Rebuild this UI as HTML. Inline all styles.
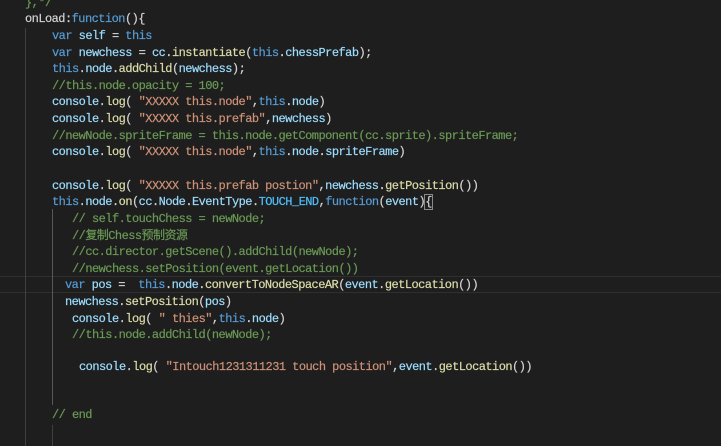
<!DOCTYPE html>
<html><head><meta charset="utf-8"><style>
html,body{margin:0;padding:0;background:#1e1e1e;width:721px;height:446px;overflow:hidden}
.l{position:absolute;white-space:pre;font-family:"Liberation Mono","Noto Sans CJK SC",monospace;font-size:12px;letter-spacing:-0.54px;line-height:16px;color:#d4d4d4;-webkit-text-stroke:0.2px}
.k{color:#569cd6}.v{color:#9cdcfe}.f{color:#dcdcaa}.s{color:#ce9178}.c{color:#6a9955}.e{color:#4fc1ff}
.g{position:absolute;width:1px;background:#404040}
.hl{position:absolute;left:0;width:721px;top:276px;height:15px;border-top:1px solid #2f2f2f;border-bottom:1px solid #2f2f2f}
</style></head><body>
<div class="hl"></div>
<div class="g" style="left:25px;top:28px;height:418px"></div>
<div class="g" style="left:52px;top:209px;height:196px;background:#585858"></div>
<div class="g" style="left:52px;top:425px;height:21px"></div>
<div class="l c" style="left:25px;top:-5px">},*/</div>
<div class="l" style="left:25px;top:11px">onLoad:<span class="k">function</span>(){</div>
<div class="l" style="left:52px;top:28px"><span class="k">var</span> <span class="v">self</span> = <span class="k">this</span></div>
<div class="l" style="left:52px;top:45px"><span class="k">var</span> <span class="v">newchess</span> = <span class="v">cc</span>.<span class="f">instantiate</span>(<span class="k">this</span>.<span class="v">chessPrefab</span>);</div>
<div class="l" style="left:52px;top:61px"><span class="k">this</span>.<span class="v">node</span>.<span class="f">addChild</span>(<span class="v">newchess</span>);</div>
<div class="l c" style="left:52px;top:78px">//this.node.opacity = 100;</div>
<div class="l" style="left:52px;top:94px"><span class="v">console</span>.<span class="f">log</span>( <span class="s">"XXXXX this.node"</span>,<span class="k">this</span>.<span class="v">node</span>)</div>
<div class="l" style="left:52px;top:111px"><span class="v">console</span>.<span class="f">log</span>( <span class="s">"XXXXX this.prefab"</span>,<span class="v">newchess</span>)</div>
<div class="l c" style="left:52px;top:128px">//newNode.spriteFrame = this.node.getComponent(cc.sprite).spriteFrame;</div>
<div class="l" style="left:52px;top:144px"><span class="v">console</span>.<span class="f">log</span>( <span class="s">"XXXXX this.node"</span>,<span class="k">this</span>.<span class="v">node</span>.<span class="v">spriteFrame</span>)</div>
<div class="l" style="left:52px;top:178px"><span class="v">console</span>.<span class="f">log</span>( <span class="s">"XXXXX this.prefab postion"</span>,<span class="v">newchess</span>.<span class="f">getPosition</span>())</div>
<div class="l" style="left:52px;top:194px"><span class="k">this</span>.<span class="v">node</span>.<span class="f">on</span>(<span class="v">cc</span>.<span class="v">Node</span>.<span class="v">EventType</span>.<span class="e">TOUCH_END</span>,<span class="k">function</span>(<span class="v">event</span>)<span style="outline:1px solid #888">{</span></div>
<div class="l c" style="left:72px;top:211px">// self.touchChess = newNode;</div>
<div class="l c" style="left:72px;top:228px">//复制Chess预制资源</div>
<div class="l c" style="left:72px;top:244px">//cc.director.getScene().addChild(newNode);</div>
<div class="l c" style="left:72px;top:261px">//newchess.setPosition(event.getLocation())</div>
<div class="l" style="left:65px;top:277px"><span class="k">var</span> <span class="v">pos</span> =  <span class="k">this</span>.<span class="v">node</span>.<span class="f">convertToNodeSpaceAR</span>(<span class="v">event</span>.<span class="f">getLocation</span>())</div>
<div class="l" style="left:65px;top:294px"><span class="v">newchess</span>.<span class="f">setPosition</span>(<span class="v">pos</span>)</div>
<div class="l" style="left:72px;top:311px"><span class="v">console</span>.<span class="f">log</span>( <span class="s">" thies"</span>,<span class="k">this</span>.<span class="v">node</span>)</div>
<div class="l c" style="left:72px;top:327px">//this.node.addChild(newNode);</div>
<div class="l" style="left:79px;top:359px"><span class="v">console</span>.<span class="f">log</span>( <span class="s">"Intouch1231311231 touch position"</span>,<span class="v">event</span>.<span class="f">getLocation</span>())</div>
<div class="l c" style="left:52px;top:407px">// end</div>
</body></html>
